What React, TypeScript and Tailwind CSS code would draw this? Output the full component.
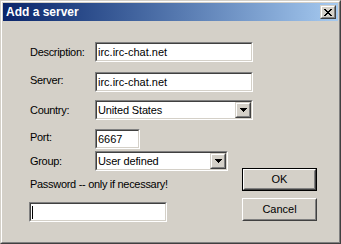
import React from "react";

const sunkenOuter =
  "border border-t-[#808080] border-l-[#808080] border-r-white border-b-white";
const sunkenInner =
  "border border-t-[#404040] border-l-[#404040] border-r-[#d4d0c8] border-b-[#d4d0c8]";

function Arrow() {
  return (
    <svg width="7" height="4" viewBox="0 0 7 4" shapeRendering="crispEdges">
      <path d="M0 0h7v1H0z M1 1h5v1H1z M2 2h3v1H2z M3 3h1v1H3z" fill="#000" />
    </svg>
  );
}

function SmallRaised({ children, className }: { children: React.ReactNode; className: string }) {
  return (
    <div
      className={
        "border border-t-[#d4d0c8] border-l-[#d4d0c8] border-r-[#404040] border-b-[#404040] " +
        className
      }
    >
      <div className="w-full h-full border border-t-white border-l-white border-r-[#808080] border-b-[#808080] bg-[#d4d0c8] flex items-center justify-center">
        {children}
      </div>
    </div>
  );
}

function Edit({ value, width }: { value: string; width: string }) {
  return (
    <div className={sunkenOuter + " h-[20px] " + width}>
      <div className={sunkenInner + " h-full bg-white pl-px text-[11px] leading-[16px] text-black whitespace-nowrap overflow-hidden"}>
        {value}
      </div>
    </div>
  );
}

function Combo({ value, width }: { value: string; width: string }) {
  return (
    <div className={sunkenOuter + " h-[20px] " + width}>
      <div className={sunkenInner + " h-full bg-white flex"}>
        <div className="flex-1 pl-px text-[11px] leading-[16px] tracking-[-0.15px] text-black whitespace-nowrap overflow-hidden">
          {value}
        </div>
        <SmallRaised className="w-[16px] h-[16px]">
          <Arrow />
        </SmallRaised>
      </div>
    </div>
  );
}

function Label({ children, up }: { children: React.ReactNode; up?: boolean }) {
  return (
    <div className={"w-[65px] text-[11px] leading-[16px] tracking-[-0.3px] text-black " + (up ? "mb-[4px]" : "")}>
      {children}
    </div>
  );
}

export default function App() {
  return (
    <div className="w-[341px] h-[244px] border border-t-[#d4d0c8] border-l-[#d4d0c8] border-r-[#404040] border-b-[#404040] font-['Liberation_Sans',Arial,sans-serif] select-none">
      <div className="h-full border border-t-white border-l-white border-r-[#808080] border-b-[#808080] bg-[#d4d0c8] p-px flex flex-col">
        {/* title bar */}
        <div className="h-[18px] flex items-center justify-between bg-linear-to-r from-[#0a246a] to-[#a6caf0] pl-[3px] pr-[2px]">
          <span className="text-white font-bold text-[12px] leading-[14px]">Add a server</span>
          <SmallRaised className="w-[16px] h-[14px]">
            <svg width="8" height="7" viewBox="0 0 8 7" shapeRendering="crispEdges">
              <path
                d="M0 0h2v1H0z M6 0h2v1H6z M1 1h2v1H1z M5 1h2v1H5z M2 2h4v1H2z M3 3h2v1H3z M2 4h4v1H2z M1 5h2v1H1z M5 5h2v1H5z M0 6h2v1H0z M6 6h2v1H6z"
                fill="#000"
              />
            </svg>
          </SmallRaised>
        </div>

        {/* body */}
        <div className="flex-1 pl-[27px] pt-[21px] flex flex-col">
          <div className="flex items-center h-[20px]">
            <Label>Description:</Label>
            <Edit value="irc.irc-chat.net" width="w-[158px]" />
          </div>
          <div className="flex items-center h-[20px] mt-[10px]">
            <Label up>Server:</Label>
            <Edit value="irc.irc-chat.net" width="w-[158px]" />
          </div>
          <div className="flex items-center h-[20px] mt-[8px]">
            <Label>Country:</Label>
            <Combo value="United States" width="w-[158px]" />
          </div>
          <div className="flex items-center h-[20px] mt-[9px]">
            <Label up>Port:</Label>
            <Edit value="6667" width="w-[45px]" />
          </div>

          <div className="flex mt-[2px]">
            <div className="w-[212px] flex flex-col">
              <div className="flex items-center h-[20px]">
                <Label>Group:</Label>
                <Combo value="User defined" width="w-[133px]" />
              </div>
              <div className="mt-[7px] text-[11px] leading-[13px] tracking-[-0.3px] text-black whitespace-nowrap">
                Password -- only if necessary!
              </div>
              <div className={sunkenOuter + " mt-[11px] -ml-px h-[20px] w-[138px]"}>
                <div className={sunkenInner + " h-full bg-white flex items-center"}>
                  <div className="ml-px w-px h-[13px] bg-black" />
                </div>
              </div>
            </div>

            <div className="w-[75px] pt-[17px] flex flex-col">
              <div className="h-[23px] border border-black">
                <div className="h-full border border-t-white border-l-white border-r-[#404040] border-b-[#404040]">
                  <div className="h-full border border-t-[#d4d0c8] border-l-[#d4d0c8] border-r-[#808080] border-b-[#808080] bg-[#d4d0c8] flex items-center justify-center text-[11px] text-black">
                    OK
                  </div>
                </div>
              </div>
              <div className="h-[23px] mt-[7px] border border-t-white border-l-white border-r-[#404040] border-b-[#404040]">
                <div className="h-full border border-t-[#d4d0c8] border-l-[#d4d0c8] border-r-[#808080] border-b-[#808080] bg-[#d4d0c8] flex items-center justify-center text-[11px] text-black">
                  Cancel
                </div>
              </div>
            </div>
          </div>
        </div>
      </div>
    </div>
  );
}
